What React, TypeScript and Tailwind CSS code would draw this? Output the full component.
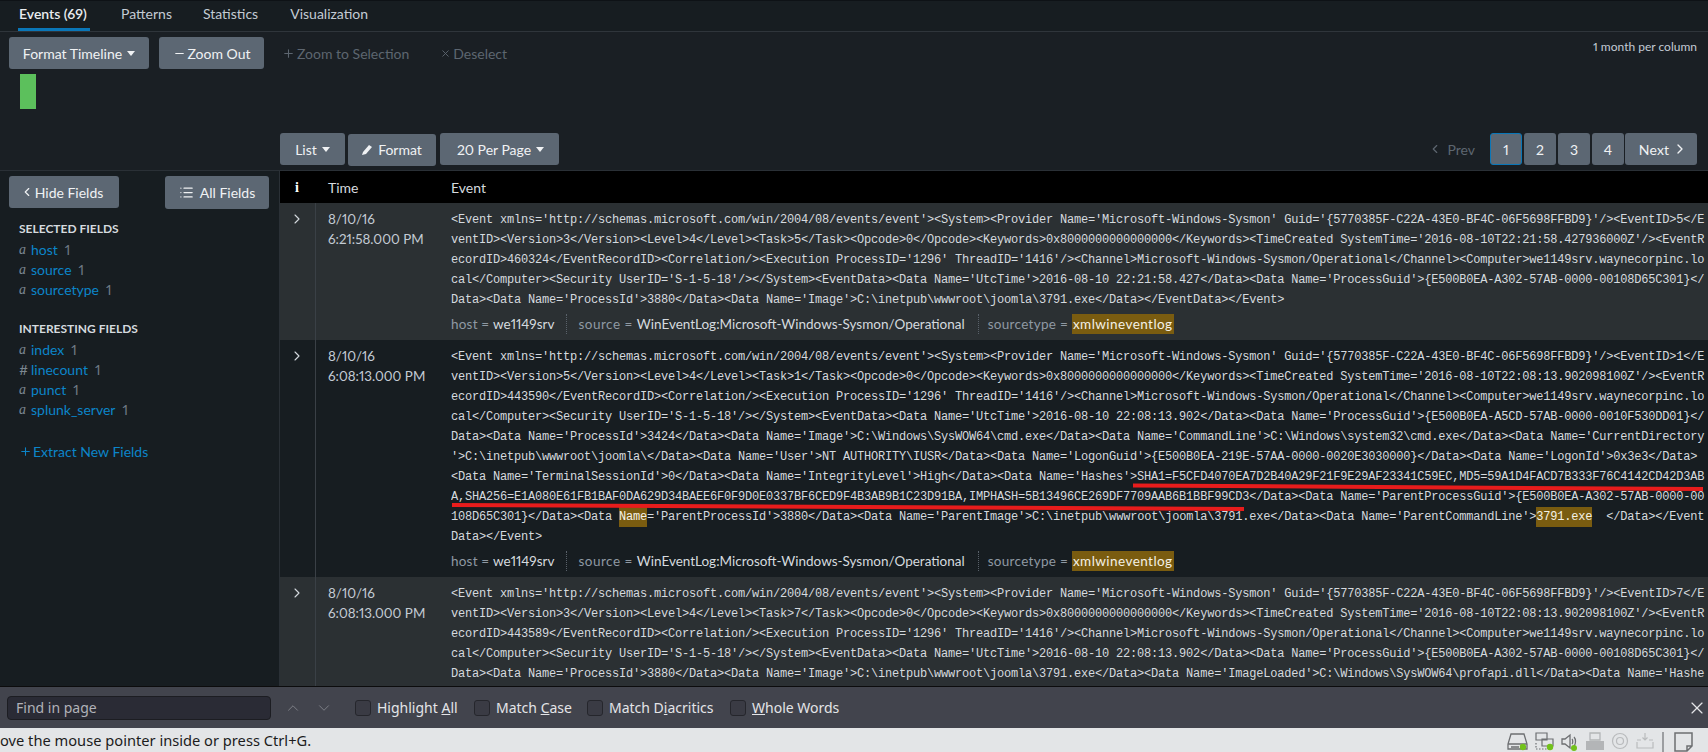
import type { ReactNode } from "react";
import { ChevronDown, ChevronLeft, ChevronRight, ChevronUp, List, Minus, Plus, X } from "lucide-react";

const HEAD = "<Event xmlns='http://schemas.microsoft.com/win/2004/08/events/event'><System><Provider Name='Microsoft-Windows-Sysmon' Guid='{5770385F-C22A-43E0-BF4C-06F5698FFBD9}'/><EventID>";

function Hl({ children }: { children: ReactNode }) {
  return <span className="bg-[#7a5c10] text-[#f4f1e6] py-[3px]">{children}</span>;
}

const row1: ReactNode[] = [
  HEAD + "5</E",
  "ventID><Version>3</Version><Level>4</Level><Task>5</Task><Opcode>0</Opcode><Keywords>0x8000000000000000</Keywords><TimeCreated SystemTime='2016-08-10T22:21:58.427936000Z'/><EventR",
  "ecordID>460324</EventRecordID><Correlation/><Execution ProcessID='1296' ThreadID='1416'/><Channel>Microsoft-Windows-Sysmon/Operational</Channel><Computer>we1149srv.waynecorpinc.lo",
  "cal</Computer><Security UserID='S-1-5-18'/></System><EventData><Data Name='UtcTime'>2016-08-10 22:21:58.427</Data><Data Name='ProcessGuid'>{E500B0EA-A302-57AB-0000-00108D65C301}</",
  "Data><Data Name='ProcessId'>3880</Data><Data Name='Image'>C:\\inetpub\\wwwroot\\joomla\\3791.exe</Data></EventData></Event>",
];

const row2: ReactNode[] = [
  HEAD + "1</E",
  "ventID><Version>5</Version><Level>4</Level><Task>1</Task><Opcode>0</Opcode><Keywords>0x8000000000000000</Keywords><TimeCreated SystemTime='2016-08-10T22:08:13.902098100Z'/><EventR",
  "ecordID>443590</EventRecordID><Correlation/><Execution ProcessID='1296' ThreadID='1416'/><Channel>Microsoft-Windows-Sysmon/Operational</Channel><Computer>we1149srv.waynecorpinc.lo",
  "cal</Computer><Security UserID='S-1-5-18'/></System><EventData><Data Name='UtcTime'>2016-08-10 22:08:13.902</Data><Data Name='ProcessGuid'>{E500B0EA-A5CD-57AB-0000-0010F530DD01}</",
  "Data><Data Name='ProcessId'>3424</Data><Data Name='Image'>C:\\Windows\\SysWOW64\\cmd.exe</Data><Data Name='CommandLine'>C:\\Windows\\system32\\cmd.exe</Data><Data Name='CurrentDirectory",
  "'>C:\\inetpub\\wwwroot\\joomla\\</Data><Data Name='User'>NT AUTHORITY\\IUSR</Data><Data Name='LogonGuid'>{E500B0EA-219E-57AA-0000-0020E3030000}</Data><Data Name='LogonId'>0x3e3</Data>",
  "<Data Name='TerminalSessionId'>0</Data><Data Name='IntegrityLevel'>High</Data><Data Name='Hashes'>SHA1=F5CFD4070EA7D2B40A29F21F9E29AF23341C59EC,MD5=59A1D4FACD7B333F76C4142CD42D3AB",
  "A,SHA256=E1A080E61FB1BAF0DA629D34BAEE6F0F9D0E0337BF6CED9F4B3AB9B1C23D91BA,IMPHASH=5B13496CE269DF7709AAB6B1BBF99CD3</Data><Data Name='ParentProcessGuid'>{E500B0EA-A302-57AB-0000-00",
  <>
    {"108D65C301}</Data><Data "}
    <Hl>Name</Hl>
    {"='ParentProcessId'>3880</Data><Data Name='ParentImage'>C:\\inetpub\\wwwroot\\joomla\\3791.exe</Data><Data Name='ParentCommandLine'>"}
    <Hl>3791.exe</Hl>
    {"  </Data></Event"}
  </>,
  "Data></Event>",
];

const row3: ReactNode[] = [
  HEAD + "7</E",
  "ventID><Version>3</Version><Level>4</Level><Task>7</Task><Opcode>0</Opcode><Keywords>0x8000000000000000</Keywords><TimeCreated SystemTime='2016-08-10T22:08:13.902098100Z'/><EventR",
  "ecordID>443589</EventRecordID><Correlation/><Execution ProcessID='1296' ThreadID='1416'/><Channel>Microsoft-Windows-Sysmon/Operational</Channel><Computer>we1149srv.waynecorpinc.lo",
  "cal</Computer><Security UserID='S-1-5-18'/></System><EventData><Data Name='UtcTime'>2016-08-10 22:08:13.902</Data><Data Name='ProcessGuid'>{E500B0EA-A302-57AB-0000-00108D65C301}</",
  "Data><Data Name='ProcessId'>3880</Data><Data Name='Image'>C:\\inetpub\\wwwroot\\joomla\\3791.exe</Data><Data Name='ImageLoaded'>C:\\Windows\\SysWOW64\\profapi.dll</Data><Data Name='Hashe",
];

function Caret() {
  return (
    <svg width="8" height="5" viewBox="0 0 8 5" className="ml-[5px] inline-block">
      <path d="M0 0h8L4 5z" fill="currentColor" />
    </svg>
  );
}

function Btn({ className, children }: { className: string; children: ReactNode }) {
  return (
    <div className={"h-8 flex items-center justify-center rounded-[3px] bg-[#5c6773] text-[#f0f2f4] text-[14px] " + className}>
      {children}
    </div>
  );
}

function Field({ type, name }: { type: string; name: string }) {
  return (
    <div className="h-5 flex items-center text-[14px]">
      <span className={"w-[12px] text-[#7c8791] " + (type === "a" ? "italic font-['Liberation_Serif',serif]" : "")}>{type}</span>
      <span className="text-[#0c85c9]">{name}</span>
      <span className="ml-[7px] text-[#6f7a85]">1</span>
    </div>
  );
}

function Meta({ k, v, hl, track }: { k: string; v: string; hl?: boolean; track: string }) {
  return (
    <span className="whitespace-pre">
      <span className={"text-[#8f99a3] " + track}>{k} = </span>
      {hl ? <span className="inline-block h-5 leading-5 bg-[#7a5c10] text-[#f4f1e6] px-px tracking-[0.45px]">{v}</span> : <span className="text-[#d5dadf]">{v}</span>}
    </span>
  );
}

function EventRow({ odd, time, lines, meta = true, grow }: { odd: boolean; time: string; lines: ReactNode[]; meta?: boolean; grow?: boolean }) {
  return (
    <div className={(odd ? "bg-[#2b3033] " : "bg-[#171d21] ") + "flex " + (grow ? "flex-1" : "")}>
      <div className="w-[36px] shrink-0 border-r border-[#3a4046] pl-[9px] pt-[8px] text-[#d5dadf]">
        <ChevronRight size={16} strokeWidth={1.6} />
      </div>
      <div className="w-[135px] shrink-0 pl-[12px] pt-[6px] text-[13.4px] leading-5 text-[#c3cbd4]">
        <div>8/10/16</div>
        <div>{time}</div>
      </div>
      <div className="flex-1 min-w-0 pt-[7px] pb-[6px] overflow-hidden">
        <div className="font-['Liberation_Mono',monospace] text-[12px] tracking-[-0.2px] leading-5 text-[#d5dadf] whitespace-pre">
          {lines.map((l, i) => (
            <div key={i} className="h-5">{l}</div>
          ))}
        </div>
        {meta && (
          <div className="mt-1 h-5 flex items-center text-[13.5px]">
            <Meta k="host" v="we1149srv" track="tracking-[0.2px]" />
            <div className="h-5 ml-[12px] mr-[11px] border-l border-dotted border-[#59616a]" />
            <Meta k="source" v="WinEventLog:Microsoft-Windows-Sysmon/Operational" track="tracking-[0.5px]" />
            <div className="h-5 ml-[13px] mr-[9px] border-l border-dotted border-[#59616a]" />
            <Meta k="sourcetype" v="xmlwineventlog" hl track="tracking-[0.3px]" />
          </div>
        )}
      </div>
    </div>
  );
}

function Check({ className, children }: { className: string; children: ReactNode }) {
  return (
    <div className={"flex items-center gap-[6px] shrink-0 " + className}>
      <span className="w-4 h-4 rounded-[3px] border border-[#25262c] bg-[#3a3b44]" />
      <span>{children}</span>
    </div>
  );
}

function StatusIcons() {
  return (
    <div className="ml-auto flex items-start h-full pt-[4px] pr-[15px] text-[#6d6f72]">
      <svg width="22" height="20" viewBox="0 0 22 20" fill="none" stroke="currentColor" strokeWidth="1.3" className="mr-[6px]">
        <path d="M4 2h13l3 10v5H1v-5z M1 12h19 M4 15h8" />
        <circle cx="16" cy="15" r="3.2" fill="#72c11b" stroke="none" />
      </svg>
      <svg width="20" height="20" viewBox="0 0 20 20" fill="none" stroke="currentColor" strokeWidth="1.2" className="mr-[6px]">
        <path d="M1 1h11v7H1z M7 7h11v7H7z" />
        <path d="M1 11v6h14" strokeDasharray="1.5 1.5" />
        <circle cx="15" cy="15" r="3.2" fill="#72c11b" stroke="none" />
      </svg>
      <svg width="18" height="20" viewBox="0 0 18 20" fill="none" stroke="currentColor" strokeWidth="1.3" className="mr-[6px]">
        <path d="M1 7h3l5-4v13l-5-4H1z M11 7c1 1 1 4 0 5 M13 5c2 2 2 7 0 9" />
        <circle cx="13" cy="16" r="3" fill="#72c11b" stroke="none" />
      </svg>
      <svg width="20" height="20" viewBox="0 0 20 20" className="mr-[6px]">
        <path d="M5 1h10v7H5z" fill="none" stroke="#b3b5b7" strokeWidth="1.3" />
        <path d="M1 9h18v9H1z" fill="#b3b5b7" />
      </svg>
      <svg width="18" height="20" viewBox="0 0 18 20" fill="none" stroke="#b9bbbd" strokeWidth="1.2" className="mr-[7px]">
        <circle cx="9" cy="9" r="7.5" />
        <circle cx="9" cy="9" r="3.5" />
      </svg>
      <svg width="18" height="20" viewBox="0 0 18 20" fill="none" stroke="#b9bbbd" strokeWidth="1.2" className="mr-[8px]">
        <path d="M9 1v7 M6.5 5.5L9 8l2.5-2.5 M1 8h4 M13 8h4 M1 10v6h16v-6" />
      </svg>
      <div className="w-[2px] h-5 bg-[#9c9ea1] mr-[10px]" />
      <svg width="19" height="20" viewBox="0 0 19 20" fill="none" stroke="currentColor" strokeWidth="1.5">
        <path d="M1 1h17v13l-5 5H1z M13 19v-5h5" />
      </svg>
    </div>
  );
}

export default function App() {
  return (
    <div className="relative h-[752px] w-[1708px] overflow-hidden flex flex-col bg-[#171d21] font-['Lato',sans-serif] proportional-nums text-[#c3cbd4]">
      <div className="h-[32px] shrink-0 flex text-[14px] border-t border-t-[#0e1216] border-b border-b-[#2f353b]">
        <div className="relative ml-[18px] w-[72px] pl-px pt-[2px] font-semibold text-[#e9ecef]">
          Events (69)
          <div className="absolute left-0 right-0 top-[27px] h-[3px] bg-[#0a77b8]" />
        </div>
        <div className="ml-[31px] pt-[2px]">Patterns</div>
        <div className="ml-[31px] pt-[2px]">Statistics</div>
        <div className="ml-[32px] pt-[2px]">Visualization</div>
      </div>

      <div className="h-[139px] shrink-0 border-b border-[#2a3036] bg-[#1a1f24] flex flex-col">
        <div className="flex items-start pl-[9px] pt-[5px] pr-[11px]">
          <Btn className="w-[140px]">
            Format Timeline
            <Caret />
          </Btn>
          <Btn className="w-[105px] ml-[10px]">
            <Minus size={13} className="mr-[2px]" />
            Zoom Out
          </Btn>
          <div className="flex items-center h-8 ml-[18px] text-[14px] text-[#5d6670]">
            <Plus size={13} className="mr-[2px]" />
            Zoom to Selection
          </div>
          <div className="flex items-center h-8 ml-[31px] text-[14px] text-[#5d6670]">
            <X size={11} className="mr-[2px]" />
            Deselect
          </div>
          <div className="ml-auto text-[12px] leading-[20px] text-[#c3cbd4]">1 month per column</div>
        </div>
        <div className="ml-[20px] mt-[5px] w-4 h-[35px] bg-[#5cc05c]" />
        <div className="flex items-start pl-[280px] pr-[11px] mt-6">
          <Btn className="w-[65px]">
            List
            <Caret />
          </Btn>
          <Btn className="w-[88px] ml-[3px] mt-px pb-[2px]">
            <svg width="11" height="11" viewBox="0 0 11 11" className="mr-[5px]">
              <path d="M0 11l1-3 6-7 3 2-6 7z" fill="currentColor" />
            </svg>
            Format
          </Btn>
          <Btn className="w-[119px] ml-[4px] pl-[2px]">
            20 Per Page
            <Caret />
          </Btn>
          <div className="ml-auto flex items-center h-8 mr-[15px] text-[14px] text-[#5d6670]">
            <ChevronLeft size={14} className="mr-[5px]" />
            Prev
          </div>
          <Btn className="w-8 border border-[#0a77b8]">1</Btn>
          <Btn className="w-8 ml-[2px]">2</Btn>
          <Btn className="w-8 ml-[2px]">3</Btn>
          <Btn className="w-8 ml-[2px]">4</Btn>
          <Btn className="w-[72px] ml-px pl-[5px] tracking-[0.2px]">
            Next
            <ChevronRight size={16} className="ml-[3px]" />
          </Btn>
        </div>
      </div>

      <div className="flex flex-1 min-h-0 overflow-hidden">
        <div className="w-[280px] shrink-0 border-r border-[#2a3036] bg-[#171d21] px-[9px] pt-[5px]">
          <div className="flex justify-between pr-[1px]">
            <Btn className="w-[110px] pr-[5px]">
              <ChevronLeft size={14} className="mr-px" />
              Hide Fields
            </Btn>
            <Btn className="w-[104px] h-[33px]">
              <List size={15} className="mr-[6px]" />
              All Fields
            </Btn>
          </div>
          <div className="pl-[10px]">
            <div className="mt-[10px] h-5 leading-5 text-[12px] font-bold text-[#d5dadf]">SELECTED FIELDS</div>
            <div>
              <Field type="a" name="host" />
              <Field type="a" name="source" />
              <Field type="a" name="sourcetype" />
            </div>
            <div className="mt-[20px] h-5 leading-5 text-[12px] font-bold text-[#d5dadf]">INTERESTING FIELDS</div>
            <div>
              <Field type="a" name="index" />
              <Field type="#" name="linecount" />
              <Field type="a" name="punct" />
              <Field type="a" name="splunk_server" />
            </div>
            <div className="mt-[22px] flex items-center text-[14px] text-[#0c85c9]">
              <Plus size={13} className="mr-px" />
              Extract New Fields
            </div>
          </div>
        </div>

        <div className="flex-1 min-w-0 flex flex-col overflow-hidden">
          <div className="h-[32px] shrink-0 flex items-center bg-black text-[14px] text-[#d5dadf]">
            <span className="w-[36px] pl-[15px] font-['Liberation_Serif',serif] font-bold text-white">i</span>
            <span className="w-[135px] pl-[12px]">Time</span>
            <span>Event</span>
          </div>
          <EventRow odd time="6:21:58.000 PM" lines={row1} />
          <EventRow odd={false} time="6:08:13.000 PM" lines={row2} />
          <EventRow odd time="6:08:13.000 PM" lines={row3} meta={false} grow />
        </div>
      </div>

      {/* red marker lines drawn over the screenshot */}
      <svg width="1708" height="752" className="absolute left-0 top-0 pointer-events-none">
        <path d="M1133 485.5 L1703 489" stroke="#e81c1c" strokeWidth="4" />
        <path d="M452 505 L1244 509" stroke="#e81c1c" strokeWidth="4" />
      </svg>

      <div className="h-[42px] shrink-0 border-t border-[#0c0c0d] bg-[#42444d] flex items-center text-[14px] text-[#e4e5e8] font-['Noto_Sans',sans-serif]">
        <div className="ml-[7px] w-[264px] h-6 rounded-[4px] border border-[#1c1d22] bg-[#2a2b35] pl-[8px] leading-[22px] text-[#b1b2b8]">
          Find in page
        </div>
        <ChevronUp size={18} strokeWidth={1.3} className="ml-[13px] text-[#7d7f87]" />
        <ChevronDown size={18} strokeWidth={1.3} className="ml-[13px] text-[#7d7f87]" />
        <Check className="ml-[22px] w-[119px]">Highlight <u>A</u>ll</Check>
        <Check className="w-[113px]">Match <u>C</u>ase</Check>
        <Check className="w-[143px]">Match D<u>i</u>acritics</Check>
        <Check className=""><u>W</u>hole Words</Check>
        <X size={20} strokeWidth={1.4} className="ml-auto mr-px" />
      </div>

      <div className="h-[24px] shrink-0 bg-[#e3e5e7] flex items-center text-[14.67px] text-[#1c1c1c] font-['Noto_Sans',sans-serif]">
        <span className="whitespace-pre">ove the mouse pointer inside or press Ctrl+G.</span>
        <StatusIcons />
      </div>
    </div>
  );
}
